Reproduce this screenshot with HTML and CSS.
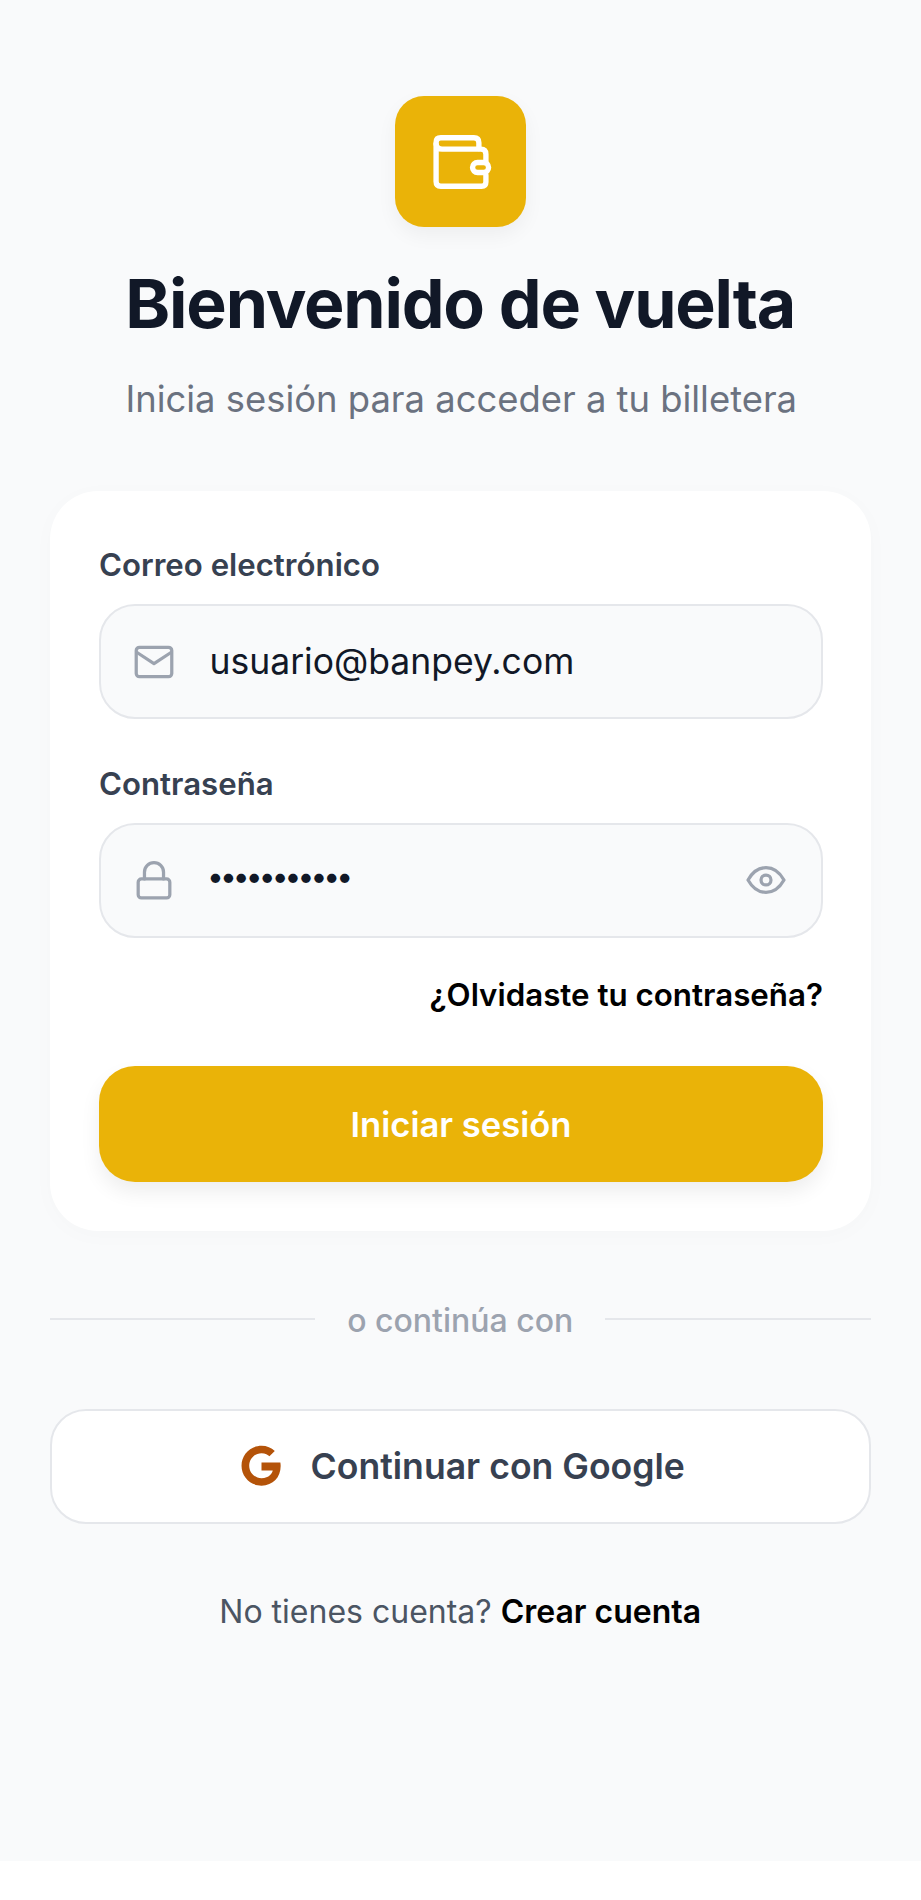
FILE: index.html
```html
<!DOCTYPE html>
<html lang="es">
<head>
<meta charset="utf-8">
<title>Banpey</title>
<link rel="stylesheet" href="styles.css">
</head>
<body>
<main class="screen">
  <header class="hero">
    <div class="logo">
      <svg width="107" height="107" viewBox="81 84 320 320" fill="none" stroke="#fff" stroke-width="16" stroke-linecap="round" stroke-linejoin="round"><path d="M296 205V188Q296 173 281 173H182Q168 173 168 187V304Q168 318 182 318H304Q317 318 317 305V285"/><path d="M168 192Q170 207 186 207H302Q317 207 317 222V245"/><rect x="277" y="247" width="48" height="30" rx="15"/></svg>
    </div>
    <h1 class="title">Bienvenido de vuelta</h1>
    <p class="subtitle">Inicia sesión para acceder a tu billetera</p>
  </header>
  <section class="card">
    <div class="field">
      <span class="label">Correo electrónico</span>
      <div class="input">
        <svg class="icon" width="52" height="52" viewBox="0 0 24 24" fill="none" stroke="#9ca3af" stroke-width="1.5" stroke-linecap="round" stroke-linejoin="round"><rect x="3.800" y="5.200" width="16.400" height="13.600" rx="1.500"/><path d="M4 7.500l8 5.200 8-5.200"/></svg>
        <span class="value">usuario@banpey.com</span>
      </div>
    </div>
    <div class="field">
      <span class="label">Contraseña</span>
      <div class="input">
        <svg class="icon" width="52" height="52" viewBox="0 0 24 24" fill="none" stroke="#9ca3af" stroke-width="1.5" stroke-linecap="round" stroke-linejoin="round"><rect x="4.700" y="11.500" width="14.600" height="8.800" rx="1.500"/><path d="M7.600 11.500V8.400a4.400 4.400 0 0 1 8.800 0v3.100"/></svg>
        <span class="value dots">•••••••••••</span>
        <svg class="eye" width="52" height="52" viewBox="0 0 24 24" fill="none" stroke="#9ca3af" stroke-width="1.5" stroke-linecap="round" stroke-linejoin="round"><path d="M3.700 12C5.500 8.800 8.500 6.300 12 6.300s6.500 2.500 8.300 5.700c-1.800 3.200-4.800 5.700-8.300 5.700S5.500 15.200 3.700 12z"/><circle cx="12" cy="12" r="2.300"/></svg>
      </div>
    </div>
    <a class="forgot">¿Olvidaste tu contraseña?</a>
    <button class="submit">Iniciar sesión</button>
  </section>
  <div class="divider"><span class="rule"></span><span class="divider-text">o continúa con</span><span class="rule"></span></div>
  <button class="google">
    <svg width="50" height="50" viewBox="0 0 24 24"><path fill="#b45309" d="M12.240 10.290v3.900h5.400c-.220 1.250-1.620 3.670-5.400 3.670-3.250 0-5.900-2.690-5.900-6s2.650-6 5.900-6c1.850 0 3.090.790 3.800 1.470l2.590-2.490C16.970 3.290 14.820 2.300 12.240 2.300 6.950 2.300 2.650 6.600 2.650 11.860s4.300 9.560 9.590 9.560c5.530 0 9.200-3.890 9.200-9.370 0-.630-.070-1.110-.150-1.760z"/></svg>
    <span>Continuar con Google</span>
  </button>
  <p class="signup">No tienes cuenta? <a class="signup-link">Crear cuenta</a></p>
</main>
</body>
</html>
```
FILE: styles.css
```css
* { box-sizing: border-box; }
html, body { margin: 0; background: #fff; }
body { font-family: Inter, "Noto Sans", sans-serif; }
.screen { height: 1861px; background: #f9fafb; padding: 96px 50px 0 49.500px; display: flex; flex-direction: column; }
.hero { display: flex; flex-direction: column; align-items: center; }
.logo { width: 131px; height: 131px; border-radius: 29px; background: #eab308; display: flex; align-items: center; justify-content: center; box-shadow: 0 8px 20px rgba(0,0,0,.05); }
.title { margin: 34px 0 0; font-size: 68px; line-height: 84px; font-weight: 700; color: #111827; letter-spacing: -1.200px; white-space: nowrap; }
.subtitle { margin: 32px 0 0 2px; font-size: 36.400px; line-height: 44px; color: #6b7280; }
.card { margin-top: 70px; background: #fff; border-radius: 48px; padding: 55px 48px 49px 49.500px; box-shadow: 0 4px 24px rgba(0,0,0,.02); }
.field { display: flex; flex-direction: column; margin-bottom: 45.500px; }
.field + .field { margin-bottom: 0; }
.label { font-size: 31.200px; line-height: 38px; font-weight: 600; color: #374151; }
.input { height: 115px; margin-top: 20px; background: #f9fafb; border: 2.500px solid #e5e7eb; border-radius: 36px; display: flex; align-items: center; padding: 0 29px 0 27px; }
.icon { flex: none; margin-right: 29.500px; }
.value { font-size: 35.500px; color: #111827; }
.dots { font-size: 30px; letter-spacing: -3.950px; margin-left: -2.500px; padding-bottom: 9px; }
.eye { margin-left: auto; flex: none; }
.forgot { display: block; margin-top: 38px; text-align: right; font-size: 31.300px; line-height: 38px; font-weight: 600; color: #000; }
.submit { display: block; width: 100%; height: 116px; margin-top: 52px; border: 0; border-radius: 36px; background: #eab308; color: #fff; font: 600 34.600px Inter, sans-serif; box-shadow: 0 10px 20px rgba(0,0,0,.07); }
.divider { display: flex; align-items: center; gap: 32px; margin-top: 70px; height: 40px; }
.rule { flex: 1; height: 2px; margin-top: -3px; background: #e5e7eb; }
.divider-text { font-size: 32px; font-weight: 500; color: #9ca3af; }
.google { margin-top: 68px; width: 100%; height: 115px; border: 2.500px solid #e5e7eb; border-radius: 36px; background: #fff; display: flex; align-items: center; justify-content: center; gap: 25px; color: #374151; font: 600 35.600px Inter, sans-serif; }
.signup { margin: 68px 0 0; text-align: center; font-size: 32px; line-height: 40px; color: #4b5563; }
.signup-link { font-weight: 600; color: #000; }
```
